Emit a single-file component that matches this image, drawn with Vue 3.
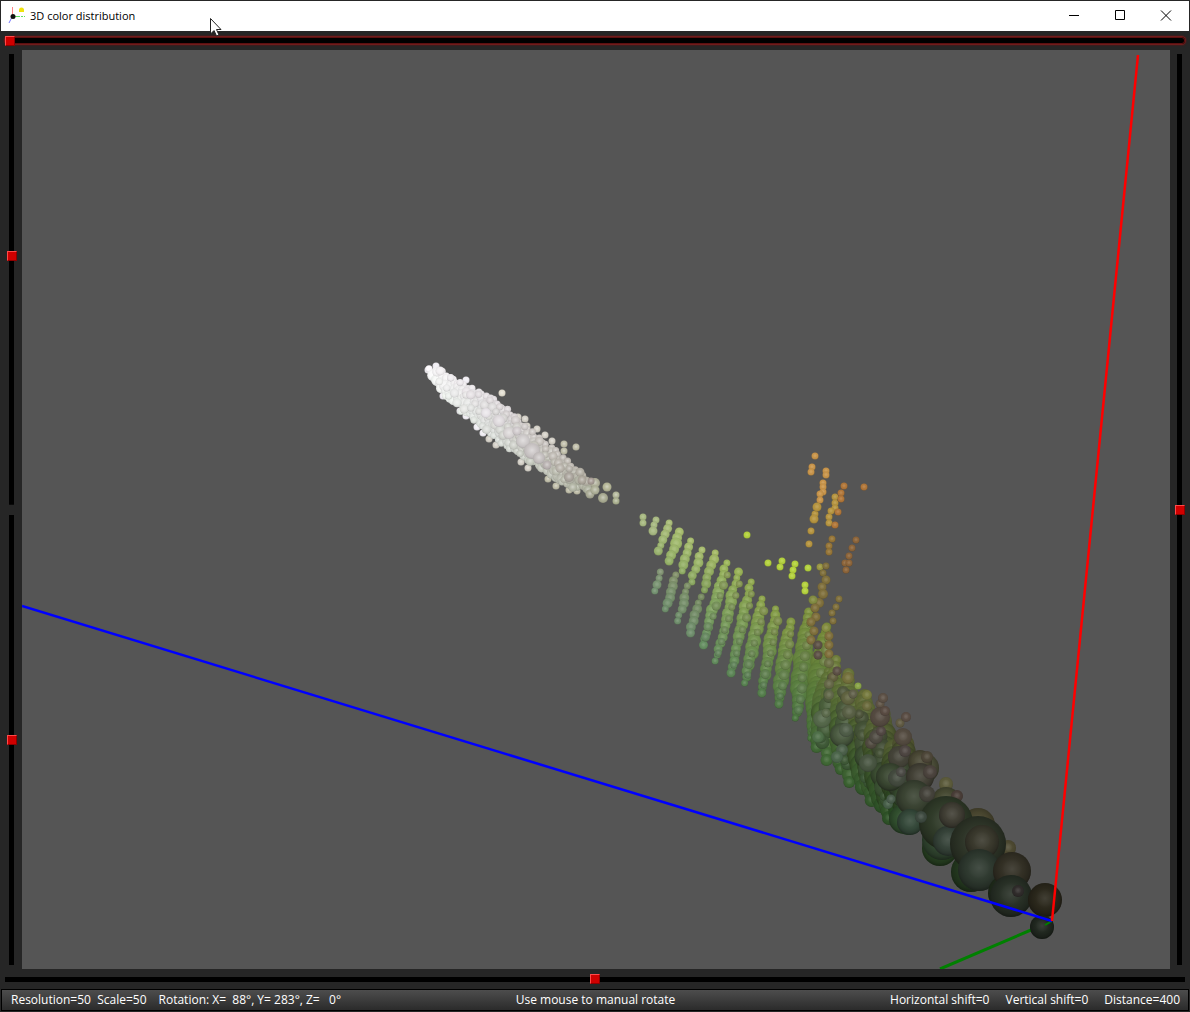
<script setup>
import { ref } from 'vue'

const zoomPos = ref(0)
const rotX = ref(447)
const rotY = ref(500)
const shiftV = ref(500)
const shiftH = ref(500)

let seed = 17
function rand() {
  seed = (seed * 16807) % 2147483647
  return seed / 2147483647
}

function mix(a, b, t) {
  const k = Math.max(0, Math.min(1, t))
  return a.map((v, i) => Math.round(v + (b[i] - v) * k))
}
const rgb = (c) => `rgb(${c.join(',')})`

const spheres = []
function shadeFor(x, r) {
  if (x < 620) return 'url(#soft)'
  return r >= 12 ? 'url(#deep)' : 'url(#shade)'
}
function add(x, y, r, color) {
  spheres.push({
    x: Math.round(x * 10) / 10,
    y: Math.round(y * 10) / 10,
    r: r < 5 ? r + 0.5 : r,
    color,
    shade: shadeFor(x, r)
  })
}
function addAll(list, color) {
  list.forEach(([x, y, r, c]) => add(x, y, r || 3, c || color))
}

// Bright cluster: [x, top edge, bottom edge] of the cloud
const cloud = [
  [430, 369, 372], [437, 369, 386], [446, 374, 395], [456, 381, 404], [468, 388, 415],
  [480, 393, 426], [492, 398, 435], [505, 409, 445], [520, 423, 456], [534, 435, 464],
  [548, 446, 474], [562, 458, 484], [576, 471, 487], [590, 481, 491]
]
function cloudAt(x) {
  let i = 0
  while (i < cloud.length - 2 && cloud[i + 1][0] < x) i++
  const [x0, t0, b0] = cloud[i]
  const [x1, t1, b1] = cloud[i + 1]
  const k = (x - x0) / (x1 - x0)
  return [t0 + (t1 - t0) * k, b0 + (b1 - b0) * k]
}
function cloudColor(x, v) {
  const k = (x - 430) / 160
  const base = k < 0.4
    ? mix([255, 252, 255], [226, 221, 224], k / 0.4)
    : mix([226, 221, 224], [180, 175, 164], (k - 0.4) / 0.6)
  return rgb(mix(base, [base[0] - 6, base[1] + 3, base[2] - 5], v))
}
addAll([
  [428, 370, 3], [436, 366, 3], [466, 380, 3], [443, 396, 3], [460, 411, 3], [466, 416, 3],
  [477, 427, 3], [483, 433, 3]
], '#f1eef4')
addAll([
  [502, 393, 3, '#e2ddcf'], [489, 439, 3], [496, 445, 3], [518, 417, 3], [525, 419, 3],
  [537, 429, 3], [545, 435, 3], [527, 426, 3], [552, 441, 3], [521, 462, 3], [528, 468, 3]
], '#d3cfc6')
addAll([
  [564, 444], [564, 451], [576, 447], [548, 479], [556, 486], [569, 490], [577, 491]
], '#bfbda8')
for (let x = 430; x <= 588; x += 4) {
  const [t, b] = cloudAt(x)
  for (let y = t; y <= b; y += 5) {
    const v = (y - t) / (b - t + 1)
    const mid = 1 - Math.abs(v - 0.5) * 2
    add(x + rand() * 3 - 1, y + rand() * 3 - 1, Math.round(3 + mid * 3), cloudColor(x, v))
  }
}
for (let x = 433; x <= 586; x += 8) {
  const [t, b] = cloudAt(x)
  for (let y = t + 2; y <= b; y += 9) {
    const v = (y - t) / (b - t + 1)
    add(x + rand() * 7 - 3, y + rand() * 7 - 3, rand() > 0.6 ? 4 : 3, cloudColor(x + 12, v))
  }
}
addAll([
  [499, 421, 6, '#dfdadd'], [486, 413, 5, '#e8e4e8'], [509, 433, 6, '#d8d4d4'],
  [523, 441, 7, '#cfcbcb'],
  [532, 451, 8, '#c9c4c4'], [539, 458, 6, '#c5c0bf'], [517, 431, 4, '#d0cacc'],
  [547, 465, 4, '#bab3b2'], [569, 477, 5, '#aaa49c'], [560, 468, 4, '#b8b3aa'],
  [582, 480, 4, '#aca69b'], [595, 483, 5, '#b0b09a'], [591, 481, 3, '#a69b94'],
  [590, 494, 4, '#a9aa95'], [595, 490, 4, '#aeb098'], [607, 487, 4, '#b4b596'],
  [603, 498, 5, '#a8aa91'], [616, 495, 3, '#b3b79a'], [616, 501, 3, '#aab08f']
])

// Leaning columns of spheres, upper end to lower end; `taper` is the size kept at the ends
function column(x0, y0, x1, y1, r, from, to, step, taper = 3) {
  const n = Math.max(1, Math.round((y1 - y0) / step))
  for (let i = 0; i <= n; i++) {
    const k = i / n
    const swell = Math.sin(k * Math.PI)
    const size = Math.max(3, Math.round(taper + (r - taper) * swell + rand() * 1.4 - 0.7))
    add(x0 + (x1 - x0) * k + rand() * 2 - 1, y0 + (y1 - y0) * k, size, rgb(mix(from, to, k)))
  }
}
const lime = [169, 190, 112]
const sage = [112, 143, 109]
addAll([[643, 517], [643, 523], [656, 520], [654, 525], [653, 531, 4]], '#a9ba83')
column(669, 523, 659, 551, 4, [171, 190, 122], [155, 180, 112], 6)
column(679, 532, 670, 561, 5, lime, [150, 179, 105], 6, 4)
column(690, 541, 682, 571, 5, lime, [145, 174, 102], 6)
column(660, 572, 655, 591, 4, [132, 150, 118], [118, 148, 115], 6)
column(676, 575, 666, 609, 5, [132, 146, 108], sage, 6)
column(702, 550, 691, 582, 5, lime, [140, 169, 98], 6)
column(688, 586, 678, 621, 5, [126, 144, 104], sage, 6)
column(715, 553, 704, 590, 5, [166, 188, 103], [132, 160, 92], 6)
column(701, 597, 690, 633, 5, [120, 139, 98], sage, 6)
const fan = [
  [726, 563, 703, 645, 6], [738, 572, 716, 661, 6], [751, 582, 731, 673, 6],
  [762, 599, 745, 683, 7], [776, 609, 762, 693, 7], [790, 622, 778, 704, 8],
  [809, 612, 796, 718, 10], [826, 627, 811, 738, 11]
]
fan.forEach(([x0, y0, x1, y1, r], i) => {
  const top = mix([158, 184, 92], [122, 142, 58], i / 7)
  const low = mix([102, 143, 98], [72, 115, 60], i / 7)
  const ends = i < 4 ? 3 : 4
  const small = i < 5 ? 3 : 5
  column(x0, y0, x1, y1, r, top, low, 6, ends)
  column(x0 + 1, y0 + 12, x1 + 2, y1 - 8, small, mix(top, [114, 125, 80], 0.5), mix(low, [108, 128, 98], 0.35), 11)
})

// Dense part of the trunk
const trunk = [
  [836, 660, 826, 760, 11], [848, 674, 850, 782, 12], [864, 696, 872, 800, 13],
  [882, 714, 890, 818, 14], [902, 738, 908, 826, 15]
]
trunk.forEach(([x0, y0, x1, y1, r], i) => {
  const top = mix([112, 126, 60], [84, 86, 50], i / 4)
  const low = mix([64, 104, 53], [40, 74, 34], i / 4)
  const grey = mix([82, 98, 62], [60, 66, 48], i / 4)
  column(x0 - 8, y0 + 12, x1 - 9, y1 - 13, r, mix(top, [81, 105, 51], 0.4), low, 7, 6 + i)
  column(x0, y0, x1, y1, r, top, low, 7, 5 + i)
  column(x0 - 2, y0 + 22, x1 - 3, y1 - 18, r - 1, grey, mix(low, [62, 80, 56], 0.6), 13, 7)
  column(x0 - 4, y0 + 18, x1 - 6, y1 - 22, 6, mix(grey, [84, 88, 62], 0.5), mix(low, [66, 84, 60], 0.6), 24, 5)
})

// Yellow-green strays
addAll([
  [747, 535], [768, 563], [782, 561], [780, 567], [795, 564], [793, 570], [792, 576],
  [808, 568], [805, 585], [805, 591]
], '#b5d33e')

// Orange and brown branches
addAll([
  [815, 456], [812, 467], [811, 472], [826, 471], [826, 475], [823, 483], [823, 487],
  [823, 492], [820, 494], [820, 500]
], '#c9954a')
addAll([
  [815, 514], [817, 507, 4], [814, 519, 4], [811, 531], [809, 544], [835, 497], [835, 503],
  [835, 508], [831, 511], [829, 517], [829, 523]
], '#b79540')
addAll([
  [844, 486], [864, 487, 3], [841, 493], [841, 499], [838, 512], [835, 525]
], '#b27739')
addAll([
  [832, 539], [829, 546], [829, 552]
], '#977638')
addAll([
  [856, 540], [852, 548], [849, 556], [845, 563], [849, 563], [846, 570]
], '#8d653a')
addAll([
  [820, 567, 3, '#9a9742'], [826, 566], [823, 573], [826, 580, 4], [822, 587, 4],
  [823, 594, 5], [819, 603, 5], [813, 600, 4, '#838c42'], [815, 608, 4], [816, 617, 4],
  [811, 622, 4], [814, 631, 4], [811, 640, 4], [839, 599], [836, 607], [832, 613],
  [833, 621], [826, 628, 4, '#858d41'], [829, 636, 4], [829, 645, 4], [829, 654, 4]
], '#80703c')

// Foreground spheres of the trunk
addAll([
  [829, 663, 5, '#6d7146'], [818, 645, 4, '#5d5146'], [818, 655, 4, '#5d5146'],
  [848, 678, 6, '#74713c'], [833, 677, 5, '#63603f'], [837, 671, 4, '#5d5146'],
  [829, 684, 5, '#666848'], [829, 695, 5, '#62694a'], [858, 686, 3, '#89a547'],
  [848, 698, 7, '#606340'], [853, 694, 4, '#61604a'], [867, 695, 5, '#767a3e'],
  [867, 706, 5, '#6b6b3d'], [849, 712, 7, '#596045'], [822, 719, 9, '#55684a'],
  [826, 713, 4, '#5c6b4c'], [842, 735, 12, '#4a5a40'], [846, 730, 7, '#505e49'],
  [818, 737, 6, '#4f7049'], [842, 750, 6, '#4c604a'], [837, 757, 6, '#4c664b'],
  [868, 763, 9, '#485541'], [871, 743, 6, '#504a3f'], [876, 737, 7, '#4f4b42'],
  [881, 731, 5, '#524843'], [880, 704, 4, '#5e5345'], [883, 698, 5, '#5d5146'],
  [880, 717, 10, '#544a40'], [885, 711, 5, '#594b42'],
  [900, 723, 4, '#605a42'], [906, 717, 5, '#5a4d44'], [903, 737, 9, '#534a3f'],
  [899, 757, 11, '#444338'], [905, 751, 6, '#4e4642'],
  [890, 777, 14, '#3b4832'], [897, 778, 9, '#434a3e'],
  [901, 772, 5, '#4b4a45'], [888, 804, 5, '#48604a'], [891, 799, 4, '#4b5d4d'],
  [924, 768, 15, '#4b4d38'], [920, 762, 12, '#494734'], [927, 757, 6, '#4d4638'],
  [920, 777, 14, '#434136'], [930, 772, 7, '#4b433d'],
  [946, 784, 7, '#5c5b3b'], [946, 801, 14, '#464932'], [904, 819, 15, '#304e2d'],
  [914, 798, 18, '#3a4332'], [910, 822, 13, '#35493a'], [927, 794, 8, '#44423a'],
  [957, 796, 6, '#493d37'], [940, 848, 18, '#284222'], [942, 840, 20, '#314630'],
  [978, 825, 17, '#49462f'], [946, 823, 27, '#2f3a28'], [921, 817, 6, '#3d493f'],
  [948, 841, 15, '#354238'], [952, 815, 13, '#403e34'],
  [971, 872, 20, '#253a20'], [1008, 848, 8, '#4c4830'], [978, 844, 28, '#2d3427'],
  [982, 842, 17, '#39382c'], [979, 870, 21, '#2e392f'], [1006, 893, 18, '#212e1c'],
  [1012, 871, 19, '#322f24'], [1011, 896, 21, '#272f25'], [1018, 891, 6, '#2f2b2a']
])

const nearSpheres = [
  { x: 1045, y: 900, r: 17, color: '#2a271b' },
  { x: 1042, y: 927, r: 12, color: '#20271f' }
]
</script>

<template>
  <div class="window">
    <header class="titlebar">
      <svg class="app-icon" width="18" height="18" viewBox="0 0 18 18" aria-hidden="true">
        <path d="M4.500 8V0" stroke="#ff8585" />
        <path d="M5 9.500H17" stroke="#63e063" stroke-dasharray="7 1 2 1" />
        <path d="M4 10L1 16" stroke="#7777ff" />
        <circle cx="5" cy="9.500" r="2.500" fill="#111" />
        <path d="M11 5V3a2.500 2.500 0 0 1 5 0V5z" fill="#f0e20c" />
      </svg>
      <h1>3D color distribution</h1>
      <div class="controls">
        <button type="button" aria-label="Minimize">
          <svg width="12" height="12" viewBox="0 0 12 12"><path d="M1 5.500H11" /></svg>
        </button>
        <button type="button" aria-label="Maximize">
          <svg width="12" height="12" viewBox="0 0 12 12"><path d="M1.500 .5H10.500V9.500H1.500z" /></svg>
        </button>
        <button type="button" aria-label="Close">
          <svg width="12" height="12" viewBox="0 0 12 12"><path d="M1 .5L11 10.500M11 .5L1 10.500" /></svg>
        </button>
      </div>
      <svg class="pointer" width="14" height="21" viewBox="0 0 14 21" aria-hidden="true">
        <path d="M1.500 1.500V17L5 13.500L7.500 19L10 18L7.500 12.500H12z" fill="#fff" stroke="#222" />
      </svg>
    </header>

    <div class="bar">
      <input v-model="zoomPos" class="focused" type="range" min="0" max="1000" aria-label="Zoom" />
    </div>

    <main class="stage">
      <div class="side left">
        <input v-model="rotX" class="vertical" type="range" min="0" max="1000" aria-label="Rotation X" />
        <input v-model="rotY" class="vertical" type="range" min="0" max="1000" aria-label="Rotation Y" />
      </div>
      <svg class="view" viewBox="22 50 1148 919" role="img" aria-label="Color distribution">
        <defs>
          <radialGradient id="shade" cx="0.5" cy="0.45" r="0.58">
            <stop offset="0" stop-color="#fff" stop-opacity="0.14" />
            <stop offset="0.35" stop-color="#fff" stop-opacity="0.06" />
            <stop offset="0.6" stop-color="#000" stop-opacity="0.01" />
            <stop offset="0.8" stop-color="#000" stop-opacity="0.08" />
            <stop offset="1" stop-color="#000" stop-opacity="0.3" />
          </radialGradient>
          <radialGradient id="deep" cx="0.5" cy="0.45" r="0.58">
            <stop offset="0" stop-color="#fff" stop-opacity="0.11" />
            <stop offset="0.35" stop-color="#fff" stop-opacity="0.04" />
            <stop offset="0.55" stop-color="#000" stop-opacity="0.02" />
            <stop offset="0.8" stop-color="#000" stop-opacity="0.2" />
            <stop offset="1" stop-color="#000" stop-opacity="0.5" />
          </radialGradient>
          <radialGradient id="soft" cx="0.5" cy="0.45" r="0.58">
            <stop offset="0" stop-color="#fff" stop-opacity="0.4" />
            <stop offset="0.5" stop-color="#fff" stop-opacity="0.04" />
            <stop offset="0.75" stop-color="#000" stop-opacity="0.04" />
            <stop offset="1" stop-color="#000" stop-opacity="0.18" />
          </radialGradient>
        </defs>
        <g v-for="(s, i) in spheres" :key="i">
          <circle :cx="s.x" :cy="s.y" :r="s.r" :fill="s.color" />
          <circle :cx="s.x" :cy="s.y" :r="s.r" :fill="s.shade" />
        </g>
        <path d="M1052 921L940 969" stroke="#008000" stroke-width="3" />
        <g v-for="(s, i) in nearSpheres" :key="'n' + i">
          <circle :cx="s.x" :cy="s.y" :r="s.r" :fill="s.color" />
          <circle :cx="s.x" :cy="s.y" :r="s.r" fill="url(#deep)" />
        </g>
        <path d="M1052 921L1045 925" stroke="#008000" stroke-width="2" />
        <path d="M22 606L1052 921" stroke="#0000ff" stroke-width="2.500" />
        <path d="M1138 55L1052 921" stroke="#ff0000" stroke-width="2.500" />
      </svg>
      <div class="side right">
        <input v-model="shiftV" class="vertical" type="range" min="0" max="1000" aria-label="Vertical shift" />
      </div>
    </main>

    <div class="bar bottom">
      <input v-model="shiftH" type="range" min="0" max="1000" aria-label="Horizontal shift" />
    </div>

    <footer class="status">
      <div class="group">
        <span>Resolution=50&nbsp; Scale=50</span>
        <span>Rotation: X=&nbsp; 88°, Y= 283°, Z=&nbsp;&nbsp; 0°</span>
      </div>
      <div class="hint">Use mouse to manual rotate</div>
      <div class="group end">
        <span>Horizontal shift=0</span>
        <span>Vertical shift=0</span>
        <span>Distance=400</span>
      </div>
    </footer>
  </div>
</template>

<style>
body {
  margin: 0;
  background: #2b2c30;
}
</style>

<style scoped>
.window {
  box-sizing: border-box;
  display: flex;
  flex-direction: column;
  height: 100vh;
  padding: 1px;
  background: #262626;
  font: 12px/16px "Open Sans", "Noto Sans", sans-serif;
}
.titlebar {
  position: relative;
  flex: none;
  display: flex;
  align-items: center;
  height: 30px;
  padding-left: 7px;
  background: #fff;
  color: #000;
}
.app-icon {
  margin-right: 4px;
  fill: none;
}
h1 {
  flex: 1;
  margin: 0;
  font-size: 11px;
  font-weight: 400;
}
.controls {
  display: flex;
}
.controls button {
  display: flex;
  align-items: center;
  justify-content: center;
  width: 46px;
  height: 30px;
  padding: 0;
  border: 0;
  background: none;
}
.controls svg {
  fill: none;
  stroke: #000;
}
.pointer {
  position: absolute;
  left: 208px;
  top: 16px;
}
.bar {
  flex: none;
  display: flex;
  align-items: center;
  height: 19px;
  padding: 0 4px;
}
.bottom {
  height: 20px;
}
.stage {
  flex: 1;
  display: flex;
  min-height: 0;
}
.side {
  flex: none;
  box-sizing: border-box;
  display: flex;
  flex-direction: column;
  align-items: center;
  gap: 10px;
  padding: 4px 0;
}
.left {
  width: 21px;
}
.right {
  width: 19px;
}
.view {
  flex: 1;
  min-width: 0;
  background: #555;
}
input {
  appearance: none;
  flex: 1;
  min-width: 0;
  height: 10px;
  margin: 0;
  background: linear-gradient(#000, #000) center / 100% 5px no-repeat;
  outline: none;
}
input.focused {
  height: 7px;
  border-radius: 4px;
  background: #000;
  box-shadow: inset 0 0 0 1px #5c1010, 0 0 0 1px #701c1c, 0 0 1px 2px #3c2020;
}
input.vertical {
  writing-mode: vertical-lr;
  width: 10px;
  height: auto;
  min-height: 0;
  background: linear-gradient(#000, #000) center / 5px 100% no-repeat;
}
input::-webkit-slider-thumb {
  appearance: none;
  box-sizing: border-box;
  width: 10px;
  height: 10px;
  border: 1px solid;
  border-color: #ff4a4a #8f0000 #8f0000 #ff4a4a;
  background: #d00000;
}
.status {
  flex: none;
  box-sizing: border-box;
  display: flex;
  align-items: center;
  height: 22px;
  padding: 0 8px 0 9px;
  border: 1px solid #000;
  background: linear-gradient(#4d4d4d, #2b2b2b);
  color: #fff;
}
.group {
  flex: 1;
  display: flex;
  gap: 12px;
}
.end {
  justify-content: flex-end;
  gap: 16px;
}
</style>
